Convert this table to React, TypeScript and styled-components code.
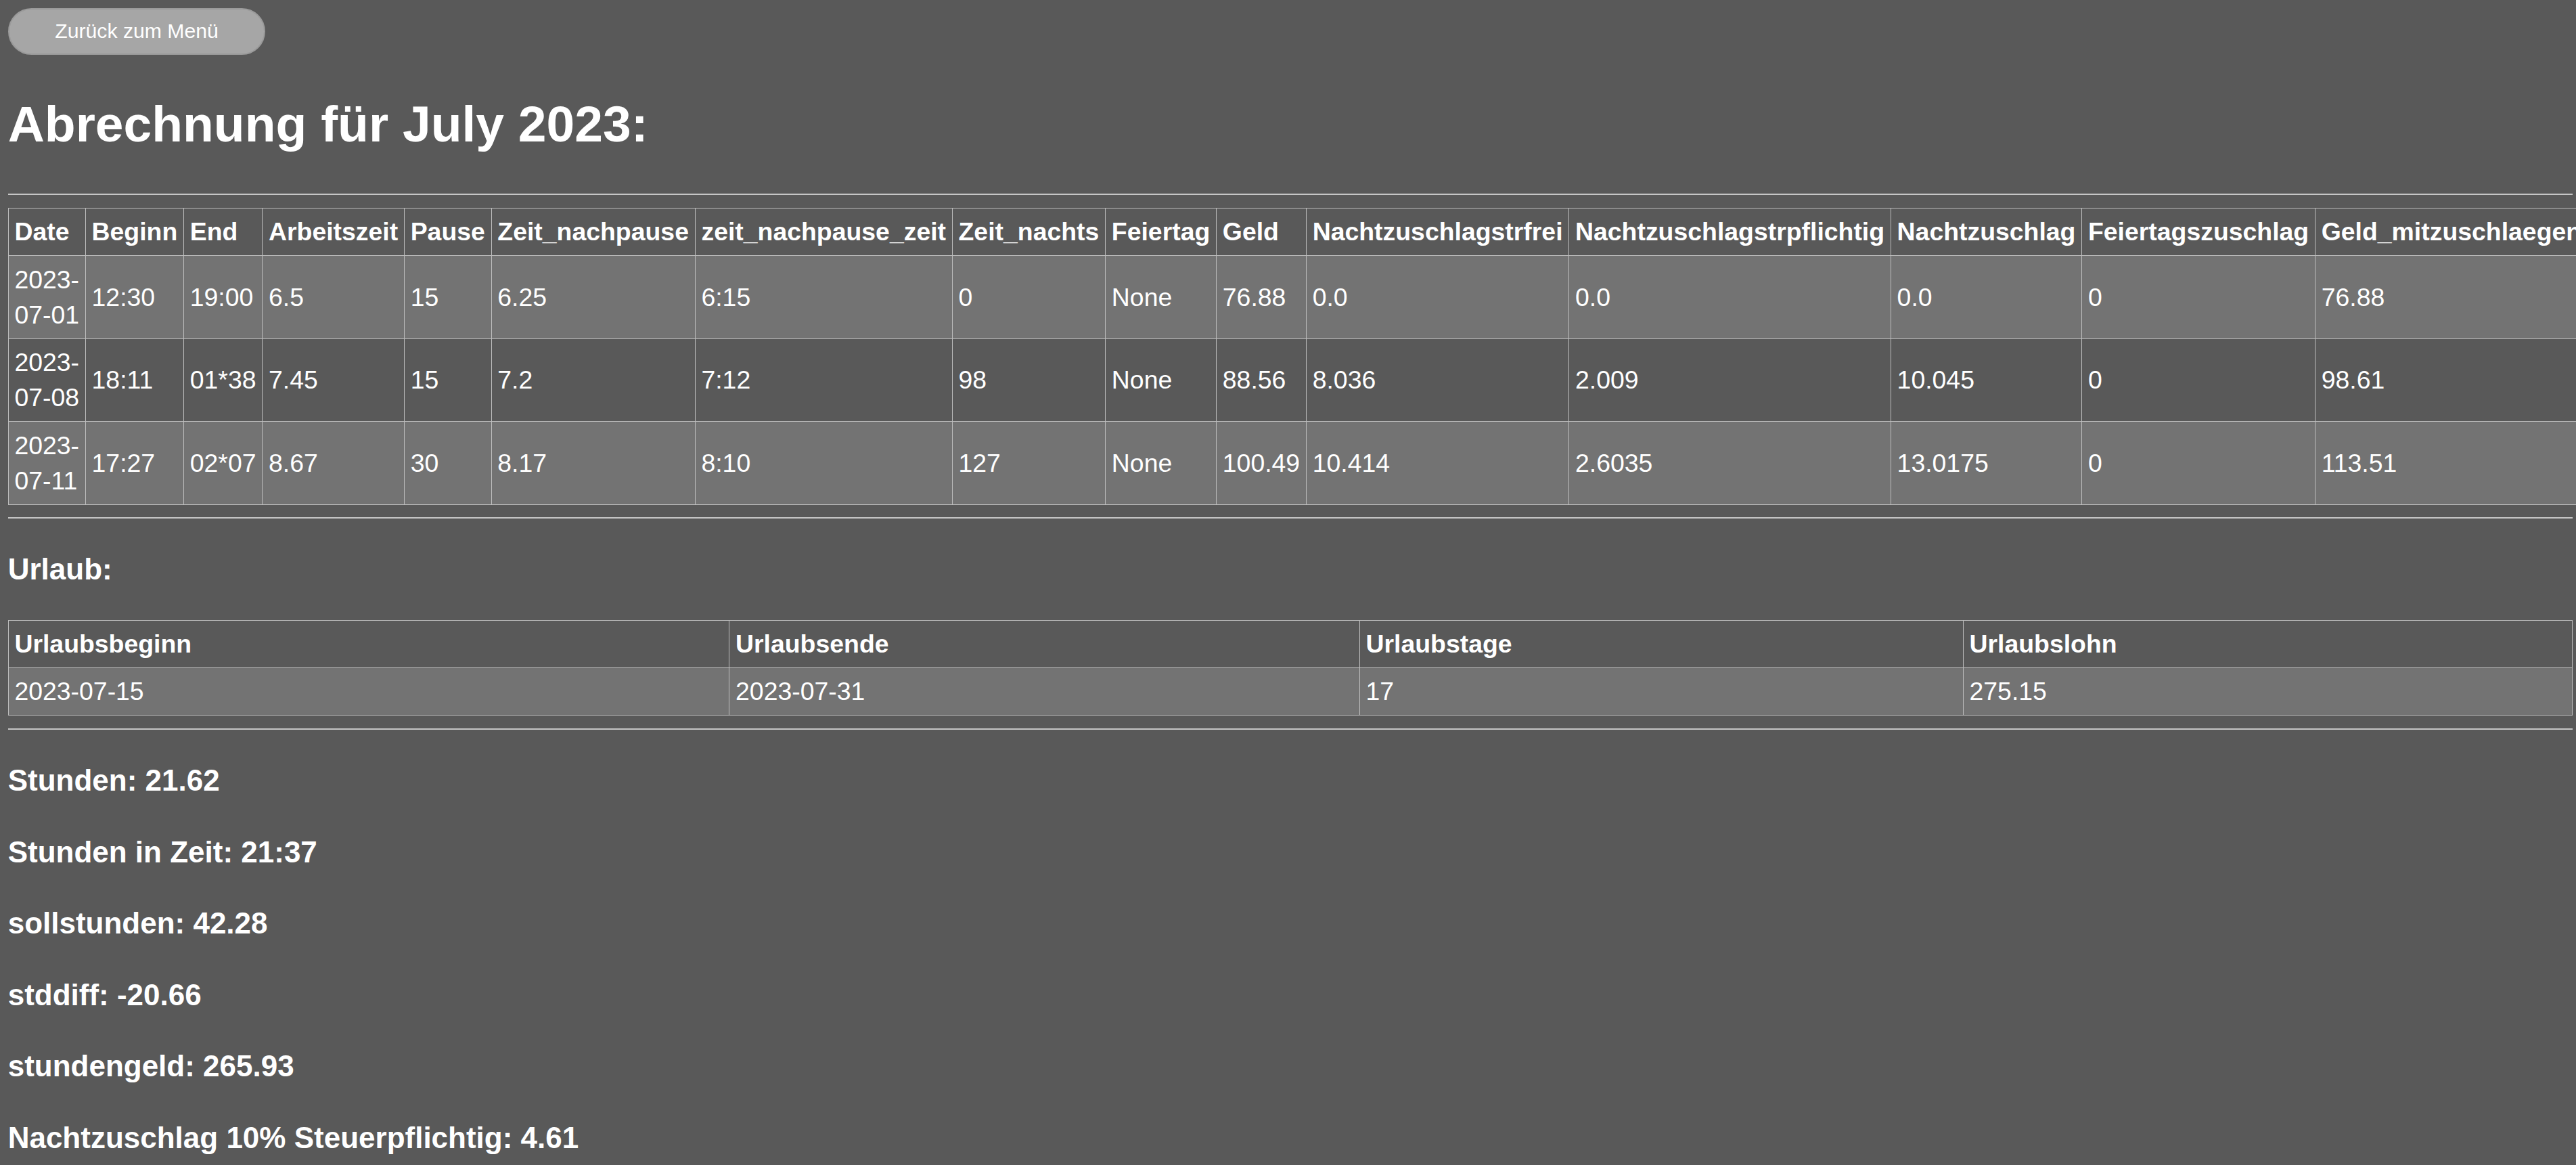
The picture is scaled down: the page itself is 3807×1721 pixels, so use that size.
import React from "react";
import styled, { createGlobalStyle } from "styled-components";

const GlobalStyle = createGlobalStyle`
  html {
    background: #595959;
    scrollbar-width: none;
  }
  html::-webkit-scrollbar, body::-webkit-scrollbar {
    display: none;
  }
  body {
    margin: 0;
    background: #595959;
    color: #ffffff;
    font-family: "Liberation Sans", Arial, sans-serif;
    font-size: 37.4px;
    line-height: 1.4;
  }
`;

const Page = styled.div`
  padding: 11.67px 5.5px 0 11.67px;
`;

const Nav = styled.div`
  display: flex;
`;

const BackButton = styled.button`
  font-family: "Liberation Sans", Arial, sans-serif;
  font-size: 30.2px;
  line-height: normal;
  color: #ffffff;
  background: #a6a6a6;
  border: 2px solid #9a9a9a;
  border-radius: 36px;
  padding: 15.6px 67.6px;
  cursor: pointer;
`;

const Title = styled.h1`
  font-size: 75px;
  font-weight: bold;
  margin: 50.25px 0;
`;

const Divider = styled.hr`
  border: none;
  border-top: 2px solid #c6c6c6;
  height: 0;
  margin: 18.7px 0;
`;

const DataTable = styled.table<{ $full?: boolean }>`
  border-collapse: collapse;
  width: ${(p) => (p.$full ? "100%" : "auto")};
  border: 1px solid #bdbdbd;
`;

const HeadCell = styled.th`
  text-align: left;
  font-weight: bold;
  padding: 8.4px 8.75px;
  border: 1px solid #bdbdbd;
`;

const Cell = styled.td`
  text-align: left;
  padding: 8.4px 8.75px;
  border: 1px solid #bdbdbd;
`;

const Row = styled.tr<{ $light?: boolean }>`
  background: ${(p) => (p.$light ? "#737373" : "transparent")};
`;

const SectionTitle = styled.h3`
  font-size: 44px;
  font-weight: bold;
  margin: 44px 0;
`;

const workHeaders = [
  "Date",
  "Beginn",
  "End",
  "Arbeitszeit",
  "Pause",
  "Zeit_nachpause",
  "zeit_nachpause_zeit",
  "Zeit_nachts",
  "Feiertag",
  "Geld",
  "Nachtzuschlagstrfrei",
  "Nachtzuschlagstrpflichtig",
  "Nachtzuschlag",
  "Feiertagszuschlag",
  "Geld_mitzuschlaegen",
];

const workRows = [
  ["2023-07-01", "12:30", "19:00", "6.5", "15", "6.25", "6:15", "0", "None", "76.88", "0.0", "0.0", "0.0", "0", "76.88"],
  ["2023-07-08", "18:11", "01*38", "7.45", "15", "7.2", "7:12", "98", "None", "88.56", "8.036", "2.009", "10.045", "0", "98.61"],
  ["2023-07-11", "17:27", "02*07", "8.67", "30", "8.17", "8:10", "127", "None", "100.49", "10.414", "2.6035", "13.0175", "0", "113.51"],
];

const vacationHeaders = ["Urlaubsbeginn", "Urlaubsende", "Urlaubstage", "Urlaubslohn"];
const vacationRows = [["2023-07-15", "2023-07-31", "17", "275.15"]];

const summary = [
  "Stunden: 21.62",
  "Stunden in Zeit: 21:37",
  "sollstunden: 42.28",
  "stddiff: -20.66",
  "stundengeld: 265.93",
  "Nachtzuschlag 10% Steuerpflichtig: 4.61",
];

function Table({ headers, rows, full }: { headers: string[]; rows: string[][]; full?: boolean }) {
  return (
    <DataTable $full={full}>
      <thead>
        <Row>
          {headers.map((h) => (
            <HeadCell key={h}>{h}</HeadCell>
          ))}
        </Row>
      </thead>
      <tbody>
        {rows.map((r, i) => (
          <Row key={i} $light={i % 2 === 0}>
            {r.map((c, j) => (
              <Cell key={j}>{c}</Cell>
            ))}
          </Row>
        ))}
      </tbody>
    </DataTable>
  );
}

export default function App() {
  return (
    <>
      <GlobalStyle />
      <Page>
        <Nav>
          <BackButton>Zurück zum Menü</BackButton>
        </Nav>
        <Title>Abrechnung für July 2023:</Title>
        <Divider />
        <Table headers={workHeaders} rows={workRows} />
        <Divider />
        <SectionTitle>Urlaub:</SectionTitle>
        <Table headers={vacationHeaders} rows={vacationRows} full />
        <Divider />
        {summary.map((s) => (
          <SectionTitle key={s}>{s}</SectionTitle>
        ))}
      </Page>
    </>
  );
}
